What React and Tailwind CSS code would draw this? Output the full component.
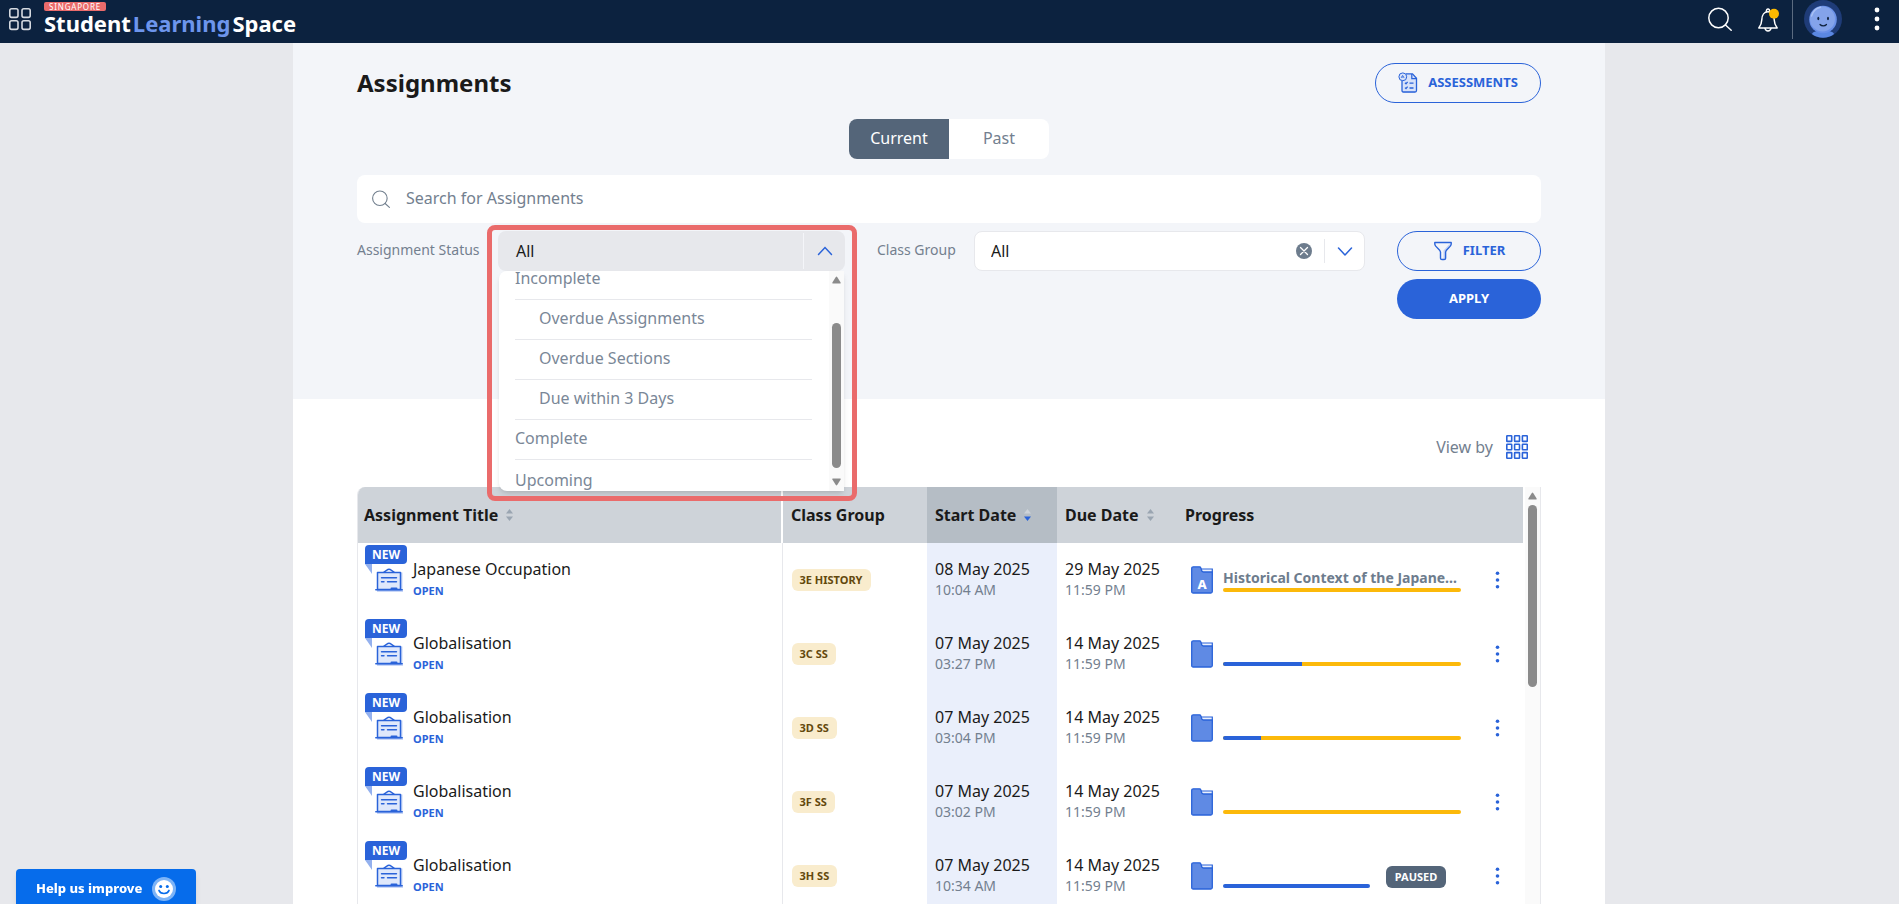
import { useState } from 'react';

const statusOptions = [
  { label: 'Incomplete' },
  { label: 'Overdue Assignments', nested: true },
  { label: 'Overdue Sections', nested: true },
  { label: 'Due within 3 Days', nested: true },
  { label: 'Complete' },
  { label: 'Upcoming' },
];

const assignments = [
  { id: 1, title: 'Japanese Occupation', group: '3E HISTORY', start: '08 May 2025', startTime: '10:04 AM', due: '29 May 2025', dueTime: '11:59 PM', done: 0, section: 'Historical Context of the Japanese Occupation' },
  { id: 2, title: 'Globalisation', group: '3C SS', start: '07 May 2025', startTime: '03:27 PM', due: '14 May 2025', dueTime: '11:59 PM', done: 33 },
  { id: 3, title: 'Globalisation', group: '3D SS', start: '07 May 2025', startTime: '03:04 PM', due: '14 May 2025', dueTime: '11:59 PM', done: 16 },
  { id: 4, title: 'Globalisation', group: '3F SS', start: '07 May 2025', startTime: '03:02 PM', due: '14 May 2025', dueTime: '11:59 PM', done: 0 },
  { id: 5, title: 'Globalisation', group: '3H SS', start: '07 May 2025', startTime: '10:34 AM', due: '14 May 2025', dueTime: '11:59 PM', done: 100, paused: true },
];

// Icons

function SearchIcon({ className }) {
  return (
    <svg className={className} viewBox="0 0 24 24" fill="none" stroke="currentColor" strokeWidth="1.5" strokeLinecap="round">
      <circle cx="10.5" cy="11" r="9.7" />
      <path d="M17.5 18l5.7 5.2" />
    </svg>
  );
}

function AppsIcon() {
  return (
    <svg className="size-6" viewBox="0 0 24 24" fill="none" stroke="#d6dae0" strokeWidth="1.6">
      <rect x="1.8" y="1.8" width="8.2" height="8.6" rx="1.8" />
      <rect x="14" y="1.8" width="8.2" height="8.6" rx="1.8" />
      <rect x="1.8" y="13.8" width="8.2" height="8.6" rx="1.8" />
      <rect x="14" y="13.8" width="8.2" height="8.6" rx="1.8" />
    </svg>
  );
}

function BellIcon() {
  return (
    <svg className="size-6" viewBox="0 0 24 24" fill="none">
      <g stroke="#fff" strokeWidth="1.5" strokeLinecap="round" strokeLinejoin="round">
        <path d="M1.800 20c1.900-2.400 2.900-4.300 3-8.200.1-4.800 2.600-8 6.200-8s6.100 3.200 6.200 8c.1 3.900 1.100 5.800 3 8.200z" />
        <path d="M9.500 3.600c-.7-3.600 3.700-3.600 3 0M8 20.400c.8 3.400 5.200 3.400 6 0" />
      </g>
      <circle cx="17" cy="5.800" r="5" fill="#fcb900" />
    </svg>
  );
}

function Avatar() {
  return (
    <svg className="size-[38px]" viewBox="0 0 38 38">
      <circle cx="19" cy="19" r="19" fill="#1f3c78" />
      <path d="M8 34c2-5 20-5 22 0-6 5-16 5-22 0z" fill="#5b88e2" />
      <circle cx="19" cy="19.5" r="13.8" fill="#6a90e8" />
      <circle cx="18.5" cy="19" r="12.5" fill="#84a3ea" />
      <path d="M7.5 16c1.500-5 5-8 9-8.800" stroke="#a9c1f4" strokeWidth="1.5" fill="none" strokeLinecap="round" />
      <ellipse cx="14.3" cy="18.5" rx="1" ry="1.7" fill="#10233f" />
      <ellipse cx="24" cy="18.5" rx="1" ry="1.7" fill="#10233f" />
      <path d="M16 24.500c1.500 1.800 5 1.800 6.500 0" stroke="#10233f" strokeWidth="1.2" fill="none" strokeLinecap="round" />
    </svg>
  );
}

function DotsIcon({ className }) {
  return (
    <svg className={className} viewBox="0 0 6 24" fill="currentColor">
      <circle cx="3" cy="3" r="2.4" />
      <circle cx="3" cy="12" r="2.4" />
      <circle cx="3" cy="21" r="2.4" />
    </svg>
  );
}

function AssessmentIcon() {
  return (
    <svg className="h-[22px] w-5" viewBox="0 0 20 22" fill="none" stroke="#2a63d9">
      <path d="M4 20.500h14.500V8h-1v11H4z" fill="#c3d2f5" stroke="none" />
      <path d="M8 1.800h6.500l4 4.400v12.300q0 1.500-1.500 1.500H5.500Q4 20 4 18.500V8.500" fill="#d8e2f9" strokeWidth="1.300" />
      <path d="M13.800 2v4.700h4.500" strokeWidth="1.200" />
      <circle cx="4.800" cy="4.800" r="3.900" fill="#d8e2f9" strokeWidth="1" />
      <path d="M3.200 5.800l1.400-2.400 1.500 2.400M3.600 5.100h2" strokeWidth=".8" />
      <path d="M7 10.800l1 1 1.600-2M7 15.600l1 1 1.600-2M11.500 11.200h4M11.500 16h4" strokeWidth="1.300" />
    </svg>
  );
}

function FilterIcon() {
  return (
    <svg className="size-5" viewBox="0 0 20 20" fill="none" stroke="#2a63d9" strokeWidth="1.4" strokeLinejoin="round">
      <path d="M12.500 10.500v7.500l-2 .5v-9l5.500-6h2z" fill="#c3d2f5" stroke="none" />
      <path d="M1.800 1.500h16.400v1.700c0 3-5.600 5-5.600 7.800v6.200c0 .8-.8 1.300-1.500 1.300H9c-.7 0-1.500-.5-1.500-1.300V11C7.500 8.200 1.800 6.200 1.800 3.200z" />
    </svg>
  );
}

function Chevron({ up }) {
  return (
    <svg className="h-4 w-4" viewBox="0 0 16 16" fill="none" stroke="#2a63d9" strokeWidth="1.5" strokeLinecap="round">
      <path d={up ? 'M1.500 11.500L8 4.500l6.500 7' : 'M1.500 5L8 12l6.500-7'} />
    </svg>
  );
}

function ClearIcon() {
  return (
    <svg className="size-4" viewBox="0 0 16 16">
      <circle cx="8" cy="8" r="8" fill="#6d7c8d" />
      <path d="M4.500 4.500l7 7M11.500 4.500l-7 7" stroke="#fff" strokeWidth="1.3" strokeLinecap="round" />
    </svg>
  );
}

function GridIcon() {
  return (
    <svg className="h-6 w-[22px]" viewBox="0 0 22 24" fill="none" stroke="#2a63d9" strokeWidth="1.6">
      {[0.8, 9.2, 17.6].map((y) =>
        [0.8, 8.6, 16.4].map((x) => (
          <rect key={`${x}-${y}`} x={x} y={y} width="4.9" height="5.6" rx=".5" />
        ))
      )}
    </svg>
  );
}

function AssignmentIcon() {
  return (
    <svg className="h-6 w-7" viewBox="0 0 28 24" fill="none" stroke="#2a63d9" strokeLinecap="round">
      <path d="M5 4.500h22.500v17H28V24H2V21.500h3z" fill="#c9d7f7" stroke="none" />
      <path d="M2.500 4.500h23v17h-23z" fill="#dfe8fb" strokeWidth="1.5" strokeLinejoin="round" />
      <path d="M9 4.200l4-2.700q1-.5 2 0l4 2.700M.8 21.700h26.400" strokeWidth="1.5" />
      <path d="M6.500 9.700h15M6.500 13.700h2.500M12.500 13.700h9" strokeWidth="1.4" />
      <path d="M16.500 20.500h5" strokeWidth="2" />
    </svg>
  );
}

function FolderIcon({ letter }) {
  return (
    <span className="relative block h-7 w-[22px]">
      <svg className="h-7 w-[22px]" viewBox="0 0 22 28">
        <path d="M10 3h11.300v6H10z" fill="#eaf0fd" stroke="#2a63d9" strokeWidth="1.2" />
        <path d="M.7 2.500Q.7.800 2.300.8h6.200q1 0 1.300 1l.5 1.500q.3 2.700 2 2.700h9v19.500q0 1.500-1.500 1.500H2.200Q.7 27 .7 25.500z" fill="#5f8ae4" stroke="#2a63d9" strokeWidth="1.3" />
      </svg>
      {letter && (
        <span className="absolute inset-x-0 top-2.5 text-center text-[13px] leading-4 font-extrabold text-white">{letter}</span>
      )}
    </span>
  );
}

function SortIcon({ active }) {
  return (
    <svg className="h-3 w-[7px]" viewBox="0 0 7 12">
      <path d="M0 4.500L3.500 0 7 4.500z" fill={active ? '#ced3d9' : '#9aa5b1'} />
      <path d="M0 7.500L3.500 12 7 7.500z" fill={active ? '#2a63d9' : '#9aa5b1'} />
    </svg>
  );
}

function ScrollArrow({ down }) {
  return (
    <svg className="h-2 w-[9px]" viewBox="0 0 9 8" fill="#8b8b8b">
      <path d={down ? 'M.8.500h7.400q.8.200.4 1L5.200 7q-.7.800-1.400 0L.4 1.500Q0 .7.8.500z' : 'M.8 7.500h7.400q.8-.2.400-1L5.200 1q-.7-.8-1.400 0L.4 6.500Q0 7.300.8 7.500z'} />
    </svg>
  );
}

function SmileIcon() {
  return (
    <svg className="size-6" viewBox="0 0 24 24">
      <circle cx="12" cy="12" r="12" fill="#7db4f7" />
      <circle cx="12" cy="12" r="9" fill="#fff" />
      <circle cx="8.7" cy="9.5" r="1.5" fill="#066ceb" />
      <circle cx="15.3" cy="9.5" r="1.5" fill="#066ceb" />
      <path d="M7 13.500c1.500 4 8.500 4 10 0" stroke="#066ceb" strokeWidth="1.7" fill="none" strokeLinecap="round" />
    </svg>
  );
}

// Page sections

function TopBar() {
  return (
    <header className="flex h-[43px] shrink-0 items-start justify-between bg-[#0c223f] pl-2">
      <div className="flex items-start gap-3">
        <button className="mt-[7px]" aria-label="Apps">
          <AppsIcon />
        </button>
        <a href="#home" className="block pt-0.5 text-white">
          <span className="block h-[9px] w-[62px] rounded-xs bg-[#ea6b6b] text-center text-[8px] leading-[9px] tracking-widest">
            SINGAPORE
          </span>
          <span className="flex gap-0.5 text-[22px] leading-6 font-bold">
            <span>Student</span>
            <span className="text-[#6d95ec]">Learning</span>
            <span>Space</span>
          </span>
        </a>
      </div>
      <div className="flex items-start text-white">
        <button className="mt-[7px] mr-[25px]" aria-label="Search">
          <SearchIcon className="size-6" />
        </button>
        <button className="mt-2 mr-[11px]" aria-label="Notifications">
          <BellIcon />
        </button>
        <div className="h-[39px] w-px bg-[#5b6b80]" />
        <button className="ml-[11px]" aria-label="Profile">
          <Avatar />
        </button>
        <button className="mt-[7px] mr-[19px] ml-8" aria-label="More">
          <DotsIcon className="h-6 w-1.5" />
        </button>
      </div>
    </header>
  );
}

function StatusSelect() {
  return (
    <div className="relative w-[347px]">
      <button
        id="status"
        aria-haspopup="listbox"
        aria-expanded="true"
        className="flex h-10 w-full items-center justify-between rounded-lg bg-[#e7e8ec] pl-[18px] text-[#1a1a1a]"
      >
        All
        <span className="flex h-9 w-[42px] items-center justify-center border-l border-[#f4f5f9]">
          <Chevron up />
        </span>
      </button>
      <div className="absolute inset-x-px top-10 z-10 flex h-[220px] overflow-hidden rounded-l-lg bg-white shadow-md">
        <ul role="listbox" aria-labelledby="status" className="-mt-[11px] flex-1 pr-[17px] pl-4">
          {statusOptions.map((option) => (
            <li
              key={option.label}
              role="option"
              aria-selected="false"
              className={`h-10 border-b border-[#e7e8ec] leading-9 text-[#7a8797] last:leading-10 ${option.nested ? 'pl-6' : ''}`}
            >
              {option.label}
            </li>
          ))}
        </ul>
        <div className="flex w-[15px] flex-col items-center bg-[#fafafa] py-[5px]">
          <ScrollArrow />
          <div className="mt-[39px] h-[145px] w-[9px] rounded-full bg-[#8b8b8b]" />
          <span className="mt-auto">
            <ScrollArrow down />
          </span>
        </div>
      </div>
      {/* highlight around the open menu */}
      <div className="pointer-events-none absolute -top-1.5 -right-3 -left-[11px] z-20 h-[276px] rounded-lg border-5 border-[#ea6b6b]" />
    </div>
  );
}

function Filters() {
  return (
    <div className="mt-2 flex items-start">
      <label htmlFor="status" className="w-[141px] text-sm leading-[38px] text-[#73808f]">
        Assignment Status
      </label>
      <StatusSelect />
      <label htmlFor="group" className="ml-8 w-[97px] text-sm leading-[38px] text-[#73808f]">
        Class Group
      </label>
      <div className="flex h-10 flex-1 items-center rounded-lg border border-[#e7e8ec] bg-white pl-4">
        <select id="group" className="h-full flex-1 appearance-none text-[#1a1a1a] outline-none">
          <option>All</option>
        </select>
        <button aria-label="Clear class group">
          <ClearIcon />
        </button>
        <span className="ml-3 flex h-6 w-10 items-center justify-center border-l border-[#e7e8ec]">
          <Chevron />
        </span>
      </div>
      <div className="ml-8 flex w-36 flex-col gap-2 text-[13px] font-bold">
        <button className="flex h-10 items-center justify-center gap-2.5 rounded-full border border-[#2a63d9] text-[#2a63d9]">
          <FilterIcon />
          FILTER
        </button>
        <button className="h-10 rounded-full bg-[#2a63d9] text-white">APPLY</button>
      </div>
    </div>
  );
}

function Progress({ item }) {
  return (
    <div className="flex h-[74px] items-start pl-[13px]">
      <span className="mt-[23px]">
        <FolderIcon letter={item.section ? 'A' : null} />
      </span>
      <div className={item.paused ? 'ml-2.5 w-[147px]' : 'ml-2.5 w-[238px]'}>
        <div className="mt-[25px] h-5 truncate text-sm leading-5 font-bold text-[#6d7c8d]">{item.section}</div>
        <div className="h-1 overflow-hidden rounded-full bg-[#fcb90a]">
          <div className="h-full bg-[#2a63d9]" style={{ width: `${item.done}%` }} />
        </div>
      </div>
      {item.paused && (
        <span className="mt-[27px] ml-4 w-[60px] rounded-md bg-[#546579] text-center text-[11px] leading-[22px] font-bold text-white">PAUSED</span>
      )}
    </div>
  );
}

function AssignmentRow({ item }) {
  return (
    <tr className="h-[74px] align-top">
      <td className="border-r border-[#e7e8ec] pl-[7px]">
        <div className="flex">
          <div className="w-12 pt-0.5">
            <div className="w-[42px] rounded-t-sm rounded-br-sm bg-[#2a63d9] text-center text-xs leading-[19px] font-bold text-white">NEW</div>
            <div className="flex items-start">
              <svg className="h-2.5 w-[7px]" viewBox="0 0 7 10">
                <path d="M0 0h7v10z" fill="#94b1ee" />
              </svg>
              <span className="mt-1 ml-[3px]">
                <AssignmentIcon />
              </span>
            </div>
          </div>
          <div className="pt-3.5">
            <div className="leading-6 text-[#1a1a1a]">{item.title}</div>
            <div className="text-[11px] leading-5 font-bold text-[#2a63d9]">OPEN</div>
          </div>
        </div>
      </td>
      <td className="pt-[26px] pl-[9px]">
        <span className="block w-fit rounded-md bg-[#f9eccd] px-2 text-[11px] leading-[22px] font-bold text-[#63480c]">{item.group}</span>
      </td>
      <td className="bg-[#eaeffb] pt-3.5 pl-2">
        <div className="leading-6 text-[#1a1a1a]">{item.start}</div>
        <div className="text-sm leading-[18px] text-[#73808f]">{item.startTime}</div>
      </td>
      <td className="pt-3.5 pl-2">
        <div className="leading-6 text-[#1a1a1a]">{item.due}</div>
        <div className="text-sm leading-[18px] text-[#73808f]">{item.dueTime}</div>
      </td>
      <td>
        <Progress item={item} />
      </td>
      <td className="align-middle">
        <button className="ml-5 block text-[#2a63d9]" aria-label="Row actions">
          <DotsIcon className="h-[18px] w-[5px]" />
        </button>
      </td>
    </tr>
  );
}

function AssignmentTable() {
  return (
    <div className="mt-7 flex min-h-0 flex-1 overflow-hidden rounded-tl-lg border-x border-[#e7e8ec]">
      <div className="flex-1">
        <table className="w-full table-fixed border-collapse">
          <thead>
            <tr className="h-14 bg-[#ced3d9] text-left text-[#1a1a1a]">
              <th className="border-r-2 border-white pl-1.5 font-bold">
                <span className="flex items-center gap-2">Assignment Title <SortIcon /></span>
              </th>
              <th className="w-[145px] pl-2 font-bold">Class Group</th>
              <th className="w-[130px] bg-[#b5bdc5] pl-2 font-bold">
                <span className="flex items-center gap-2">Start Date <SortIcon active /></span>
              </th>
              <th className="w-[121px] pl-2 font-bold">
                <span className="flex items-center gap-2">Due Date <SortIcon /></span>
              </th>
              <th className="w-[297px] pl-[7px] font-bold">Progress</th>
              <th className="w-12" aria-label="Actions" />
            </tr>
          </thead>
          <tbody>
            {assignments.map((item) => (
              <AssignmentRow key={item.id} item={item} />
            ))}
          </tbody>
        </table>
      </div>
      <div className="ml-0.5 flex w-[15px] flex-col items-center bg-[#fafafa] pt-[5px]">
        <ScrollArrow />
        <div className="mt-[5px] h-[182px] w-[9px] rounded-full bg-[#8b8b8b]" />
      </div>
    </div>
  );
}

export default function App() {
  const [tab, setTab] = useState('Current');

  return (
    <div className="flex h-screen flex-col overflow-hidden bg-[#e7e8ec] font-['Noto_Sans',sans-serif] text-base">
      <TopBar />
      <div className="flex min-h-0 flex-1 justify-center pr-px">
        <main className="flex w-full max-w-[1312px] flex-col bg-white">
          <section className="h-[356px] shrink-0 bg-[#f3f5f9] px-16 pt-5">
            <div className="flex h-10 items-center justify-between">
              <h1 className="text-2xl font-bold text-[#1a1a1a]">Assignments</h1>
              <a
                href="#assessments"
                className="flex h-10 w-[166px] items-center justify-center gap-2.5 rounded-full border border-[#2a63d9] text-[13px] font-bold text-[#2a63d9]"
              >
                <AssessmentIcon />
                ASSESSMENTS
              </a>
            </div>
            <div className="mx-auto mt-4 flex w-[200px] overflow-hidden rounded-lg bg-white">
              {['Current', 'Past'].map((name) => (
                <button
                  key={name}
                  onClick={() => setTab(name)}
                  className={`h-10 w-1/2 pb-0.5 ${tab === name ? 'bg-[#546579] text-white' : 'text-[#73808f]'}`}
                >
                  {name}
                </button>
              ))}
            </div>
            <div className="mt-4 flex h-12 items-center rounded-lg bg-white pl-[15px] text-[#73808f]">
              <SearchIcon className="size-[18px]" />
              <input
                type="search"
                aria-label="Search for Assignments"
                placeholder="Search for Assignments"
                className="h-full flex-1 pb-0.5 pl-4 outline-none placeholder:text-[#73808f]"
              />
            </div>
            <Filters />
          </section>
          <section className="flex min-h-0 flex-1 flex-col px-16 pt-9">
            <button className="mr-[13px] flex items-center gap-[13px] self-end text-[#73808f]">
              View by
              <GridIcon />
            </button>
            <AssignmentTable />
          </section>
        </main>
      </div>
      <button className="fixed bottom-0 left-4 flex h-[35px] w-[180px] items-center justify-between rounded-t-sm bg-[#066ceb] px-5 pt-1 text-[13px] font-extrabold text-white shadow-md">
        Help us improve
        <SmileIcon />
      </button>
    </div>
  );
}
